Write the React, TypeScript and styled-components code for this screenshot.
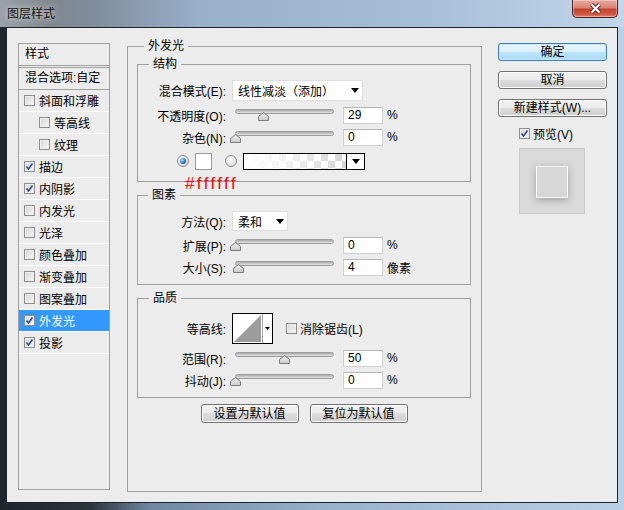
import styled, { createGlobalStyle } from "styled-components";

const GlobalStyle = createGlobalStyle`
  body {
    margin: 0;
    font-family: "Liberation Sans", "Noto Sans CJK SC", sans-serif;
    font-size: 12px;
    color: #000;
  }
`;

const Window = styled.div`
  width: 624px;
  height: 510px;
  display: flex;
  flex-direction: column;
  background: linear-gradient(
    to right,
    #1e252c 0,
    #2c343c 90px,
    #6f87a1 150px,
    #98b1cb 320px,
    #bad0e6 100%
  );
`;

const TitleBar = styled.div`
  height: 27px;
  display: flex;
  justify-content: space-between;
  align-items: flex-start;
  background: linear-gradient(
    to right,
    #9aa1a8 0,
    #80878f 50px,
    #7e8c9c 90px,
    #98b0c9 200px,
    #a6bed7 420px,
    #c2d6ea 100%
  );
`;

const Title = styled.div`
  padding: 6px 0 0 7px;
  line-height: 16px;
  font-size: 12px;
  color: #111;
  text-shadow: 0 0 6px rgba(255, 255, 255, 0.9);
`;

const CloseButton = styled.div`
  width: 46px;
  height: 18px;
  margin-right: 6px;
  box-sizing: border-box;
  border: 1px solid #4f211b;
  border-top: none;
  border-radius: 0 0 5px 5px;
  display: flex;
  align-items: center;
  justify-content: center;
  background: linear-gradient(#e6aa9e 0, #d98474 45%, #c4422e 55%, #cf5a45 85%, #e08a74 100%);
  box-shadow: inset 0 0 0 1px rgba(255, 255, 255, 0.35);
`;

const Body = styled.div`
  flex: 1;
  margin: 0 6px 7px;
  border: 1px solid #1d2329;
  background: #ececec;
  display: flex;
  align-items: flex-start;
  padding: 15px 0 0 11px;
  min-height: 0;
`;

/* ---------- left styles list ---------- */

const StylesPanel = styled.div`
  width: 92px;
  height: 447px;
  box-sizing: border-box;
  border: 1px solid #a0a0a0;
  margin-right: 17px;
  flex-shrink: 0;
`;

const PanelHead = styled.div<{ $double?: boolean }>`
  height: 17px;
  padding: 0 0 4px 6px;
  display: flex;
  align-items: center;
  border-bottom: ${(p) => (p.$double ? "3px double #a0a0a0" : "1px solid #a0a0a0")};
`;

const StyleRow = styled.div<{ $indent?: boolean; $active?: boolean }>`
  height: 21px;
  border-bottom: 1px solid #fff;
  display: flex;
  align-items: center;
  gap: 4px;
  padding-left: ${(p) => (p.$indent ? 20 : 5)}px;
  background: ${(p) => (p.$active ? "#3399ff" : "transparent")};
  color: ${(p) => (p.$active ? "#fff" : "#000")};
`;

const CheckBox = styled.span`
  width: 11px;
  height: 11px;
  box-sizing: border-box;
  border: 1px solid #8d8d8d;
  background: linear-gradient(135deg, #d6d6d6, #f7f7f7);
  box-shadow: inset 0 0 0 1px #eeeeee;
  display: flex;
  align-items: center;
  justify-content: center;
  flex-shrink: 0;
`;

const Check = ({ on }: { on?: boolean }) => (
  <CheckBox>
    {on && (
      <svg width="9" height="9" viewBox="0 0 9 9">
        <path d="M1.5 4.5 L3.5 7 L7.5 1.5" fill="none" stroke="#33459a" strokeWidth="1.6" />
      </svg>
    )}
  </CheckBox>
);

/* ---------- main group boxes ---------- */

const MainSet = styled.fieldset`
  width: 355px;
  height: 453px;
  box-sizing: border-box;
  margin: -4px 16px 0 0;
  padding: 4px 10px 0 9px;
  border: 1px solid #a0a0a0;
  min-width: 0;
  flex-shrink: 0;
`;

const Group = styled.fieldset<{ $top?: number; $pt: number; $pb: number }>`
  margin: ${(p) => p.$top ?? 0}px 0 0;
  padding: ${(p) => p.$pt}px 0 ${(p) => p.$pb}px;
  border: 1px solid #a0a0a0;
  min-width: 0;
`;

const Legend = styled.legend<{ $ml: number }>`
  padding: 0 4px;
  margin-left: ${(p) => p.$ml}px;
  line-height: 14px;
  font-size: 12px;
`;

const Row = styled.div<{ $h: number; $mt?: number }>`
  height: ${(p) => p.$h}px;
  margin-top: ${(p) => p.$mt ?? 0}px;
  display: flex;
  align-items: center;
`;

const Label = styled.span`
  width: 88px;
  margin-right: 6px;
  text-align: right;
  white-space: nowrap;
  flex-shrink: 0;
`;

const Select = styled.div<{ $w: number; $h: number }>`
  width: ${(p) => p.$w}px;
  height: ${(p) => p.$h}px;
  box-sizing: border-box;
  border: 1px solid #dedede;
  background: #fff;
  display: flex;
  align-items: center;
  justify-content: space-between;
  padding: 0 3px 0 5px;
`;

const Arrow = () => (
  <svg width="8" height="5" viewBox="0 0 8 5">
    <path d="M0 0 H8 L4 5 Z" fill="#000" />
  </svg>
);

const SliderBox = styled.div`
  position: relative;
  width: 105px;
  height: 22px;
  margin-right: 6px;
  flex-shrink: 0;
`;

const Track = styled.div`
  margin: 5px 3px 0;
  height: 5px;
  box-sizing: border-box;
  border: 1px solid #9c9c9c;
  border-radius: 3px;
  background: linear-gradient(#a9a9a9, #e4e4e4);
`;

const Thumb = styled.svg`
  position: absolute;
  top: 8px;
`;

const Slider = ({ value, max }: { value: number; max: number }) => (
  <SliderBox>
    <Track />
    <Thumb width="11" height="9" viewBox="0 0 11 9" style={{ left: 3 + (value / max) * 99 - 5.5 }}>
      <defs>
        <linearGradient id="thumbFill" x1="0" y1="0" x2="0" y2="1">
          <stop offset="0" stopColor="#f4f4f4" />
          <stop offset="1" stopColor="#c9c9c9" />
        </linearGradient>
      </defs>
      <path d="M5.5 0.5 L10.5 4.5 V8.5 H0.5 V4.5 Z" fill="url(#thumbFill)" stroke="#7c7c7c" />
    </Thumb>
  </SliderBox>
);

const NumberField = styled.input`
  width: 40px;
  height: 17px;
  box-sizing: border-box;
  border: 1px solid #cfcfcf;
  border-top-color: #b5b5b5;
  background: #fff;
  font: inherit;
  font-size: 12px;
  padding: 0 0 0 4px;
  color: #000;
  flex-shrink: 0;
`;

const Unit = styled.span`
  margin-left: 4px;
`;

const ColorRow = styled(Row)`
  padding-left: 39px;
`;

const Radio = styled.span<{ $on?: boolean }>`
  width: 12px;
  height: 12px;
  box-sizing: border-box;
  border-radius: 50%;
  border: 1px solid #8b8b8b;
  background: radial-gradient(circle at 40% 35%, #ffffff, #cfcfcf);
  display: flex;
  align-items: center;
  justify-content: center;
  flex-shrink: 0;
  &::after {
    content: "";
    display: ${(p) => (p.$on ? "block" : "none")};
    width: 6px;
    height: 6px;
    border-radius: 50%;
    background: radial-gradient(circle at 35% 35%, #aee0ff, #1b6fb6 60%, #0c3a6c);
  }
`;

const Swatch = styled.span`
  width: 17px;
  height: 17px;
  box-sizing: border-box;
  border: 1px solid #9a9a9a;
  background: #fff;
  margin: 0 13px 0 6px;
`;

const GradientPicker = styled.div`
  width: 122px;
  height: 17px;
  box-sizing: border-box;
  margin-left: 6px;
  border: 1px solid #000;
  display: flex;
  background: linear-gradient(to right, #fff 0%, rgba(255, 255, 255, 0.6) 45%, rgba(255, 255, 255, 0) 90%),
    repeating-conic-gradient(#d2d2d2 0 25%, #ffffff 0 50%) 0 0 / 14px 14px;
`;

const GradientArrow = styled.div`
  margin-left: auto;
  width: 17px;
  border-left: 1px solid #000;
  background: #fff;
  display: flex;
  align-items: center;
  justify-content: center;
`;

const HexNote = styled.div`
  height: 0;
  margin-left: 47px;
  line-height: 23px;
  font-family: "Liberation Sans", sans-serif;
  font-size: 17px;
  letter-spacing: 2.4px;
  color: #ff0000;
  white-space: nowrap;
`;

const ContourBox = styled.div`
  width: 41px;
  height: 31px;
  box-sizing: border-box;
  border: 1px solid #000;
  background: #fff;
  display: flex;
`;

const ContourArrow = styled.div`
  flex: 1;
  border-left: 1px solid #a0a0a0;
  display: flex;
  align-items: center;
  justify-content: center;
`;

const CheckLabel = styled.label`
  display: flex;
  align-items: center;
  gap: 3px;
  margin-left: 13px;
`;

const ButtonRow = styled.div`
  margin-top: 6px;
  display: flex;
  justify-content: center;
  gap: 11px;
`;

const Button = styled.button<{ $primary?: boolean; $w: number; $h: number }>`
  width: ${(p) => p.$w}px;
  height: ${(p) => p.$h}px;
  box-sizing: border-box;
  padding: 0;
  border: 1px solid ${(p) => (p.$primary ? "#3c7fb1" : "#707070")};
  border-radius: 3px;
  font: inherit;
  font-size: 12px;
  line-height: 14px;
  color: #000;
  background: ${(p) =>
    p.$primary
      ? "linear-gradient(#eaf6fd 0, #d9f0fc 50%, #bee6fd 50%, #a7d9f5 100%)"
      : "linear-gradient(#f2f2f2 0, #ebebeb 50%, #dddddd 50%, #cfcfcf 100%)"};
  box-shadow: inset 0 0 0 1px ${(p) => (p.$primary ? "#c6e6f8" : "#fcfcfc")};
`;

/* ---------- right column ---------- */

const SideColumn = styled.div`
  width: 109px;
  display: flex;
  flex-direction: column;
  gap: 10px;
`;

const PreviewToggle = styled.label`
  display: flex;
  align-items: center;
  gap: 3px;
  height: 12px;
  padding-left: 21px;
`;

const PreviewBox = styled.div`
  margin: -1px 0 0 21px;
  width: 66px;
  height: 66px;
  box-sizing: border-box;
  border: 1px solid #c8c8c8;
  background: #dadada;
  display: flex;
  align-items: center;
  justify-content: center;
`;

const PreviewSquare = styled.div`
  width: 32px;
  height: 32px;
  margin-top: 2px;
  box-sizing: border-box;
  border: 1px solid #f7f7f7;
  background: #d7d7d7;
  box-shadow: 0 2px 8px rgba(0, 0, 0, 0.28);
`;

const styleItems: { name: string; on?: boolean; indent?: boolean; active?: boolean }[] = [
  { name: "斜面和浮雕" },
  { name: "等高线", indent: true },
  { name: "纹理", indent: true },
  { name: "描边", on: true },
  { name: "内阴影", on: true },
  { name: "内发光" },
  { name: "光泽" },
  { name: "颜色叠加" },
  { name: "渐变叠加" },
  { name: "图案叠加" },
  { name: "外发光", on: true, active: true },
  { name: "投影", on: true },
];

const SliderRow = ({
  label,
  value,
  max = 100,
  unit,
}: {
  label: string;
  value: number;
  max?: number;
  unit: string;
}) => (
  <Row $h={22}>
    <Label>{label}</Label>
    <Slider value={value} max={max} />
    <NumberField readOnly value={String(value)} />
    <Unit>{unit}</Unit>
  </Row>
);

export default function App() {
  return (
    <>
      <GlobalStyle />
      <Window>
        <TitleBar>
          <Title>图层样式</Title>
          <CloseButton>
            <svg width="13" height="11" viewBox="0 0 13 11">
              <path d="M2.5 1.5 L10.5 9.5 M10.5 1.5 L2.5 9.5" stroke="#5a2a22" strokeWidth="4" />
              <path d="M2.5 1.5 L10.5 9.5 M10.5 1.5 L2.5 9.5" stroke="#fff" strokeWidth="2.2" />
            </svg>
          </CloseButton>
        </TitleBar>

        <Body>
          <StylesPanel>
            <PanelHead $double>样式</PanelHead>
            <PanelHead>混合选项:自定</PanelHead>
            {styleItems.map((item) => (
              <StyleRow key={item.name} $indent={item.indent} $active={item.active}>
                <Check on={item.on} />
                {item.name}
              </StyleRow>
            ))}
          </StylesPanel>

          <MainSet>
            <Legend $ml={7}>外发光</Legend>

            <Group $pt={9} $pb={9}>
              <Legend $ml={11}>结构</Legend>
              <Row $h={21}>
                <Label>混合模式(E):</Label>
                <Select $w={131} $h={21}>
                  线性减淡（添加）
                  <Arrow />
                </Select>
              </Row>
              <Row $h={0} $mt={3} />
              <SliderRow label="不透明度(O):" value={29} unit="%" />
              <SliderRow label="杂色(N):" value={0} unit="%" />
              <ColorRow $h={22} $mt={2}>
                <Radio $on />
                <Swatch />
                <Radio />
                <GradientPicker>
                  <GradientArrow>
                    <Arrow />
                  </GradientArrow>
                </GradientPicker>
              </ColorRow>
              <HexNote>#ffffff</HexNote>
            </Group>

            <Group $top={6} $pt={9} $pb={6}>
              <Legend $ml={10}>图素</Legend>
              <Row $h={20}>
                <Label>方法(Q):</Label>
                <Select $w={56} $h={20}>
                  柔和
                  <Arrow />
                </Select>
              </Row>
              <Row $h={0} $mt={3} />
              <SliderRow label="扩展(P):" value={0} unit="%" />
              <SliderRow label="大小(S):" value={4} unit="像素" />
            </Group>

            <Group $top={6} $pt={8} $pb={6}>
              <Legend $ml={11}>品质</Legend>
              <Row $h={31}>
                <Label>等高线:</Label>
                <ContourBox>
                  <svg width="29" height="29" viewBox="0 0 29 29">
                    <path d="M1 28 L28 1 V28 Z" fill="#9c9c9c" />
                  </svg>
                  <ContourArrow>
                    <svg width="5" height="3" viewBox="0 0 5 3">
                      <path d="M0 0 H5 L2.5 3 Z" fill="#000" />
                    </svg>
                  </ContourArrow>
                </ContourBox>
                <CheckLabel>
                  <Check />
                  消除锯齿(L)
                </CheckLabel>
              </Row>
              <Row $h={0} $mt={3} />
              <SliderRow label="范围(R):" value={50} unit="%" />
              <SliderRow label="抖动(J):" value={0} unit="%" />
            </Group>

            <ButtonRow>
              <Button $w={98} $h={19}>设置为默认值</Button>
              <Button $w={98} $h={19}>复位为默认值</Button>
            </ButtonRow>
          </MainSet>

          <SideColumn>
            <Button $primary $w={109} $h={18}>确定</Button>
            <Button $w={109} $h={18}>取消</Button>
            <Button $w={109} $h={18}>新建样式(W)...</Button>
            <PreviewToggle>
              <Check on />
              预览(V)
            </PreviewToggle>
            <PreviewBox>
              <PreviewSquare />
            </PreviewBox>
          </SideColumn>
        </Body>
      </Window>
    </>
  );
}
